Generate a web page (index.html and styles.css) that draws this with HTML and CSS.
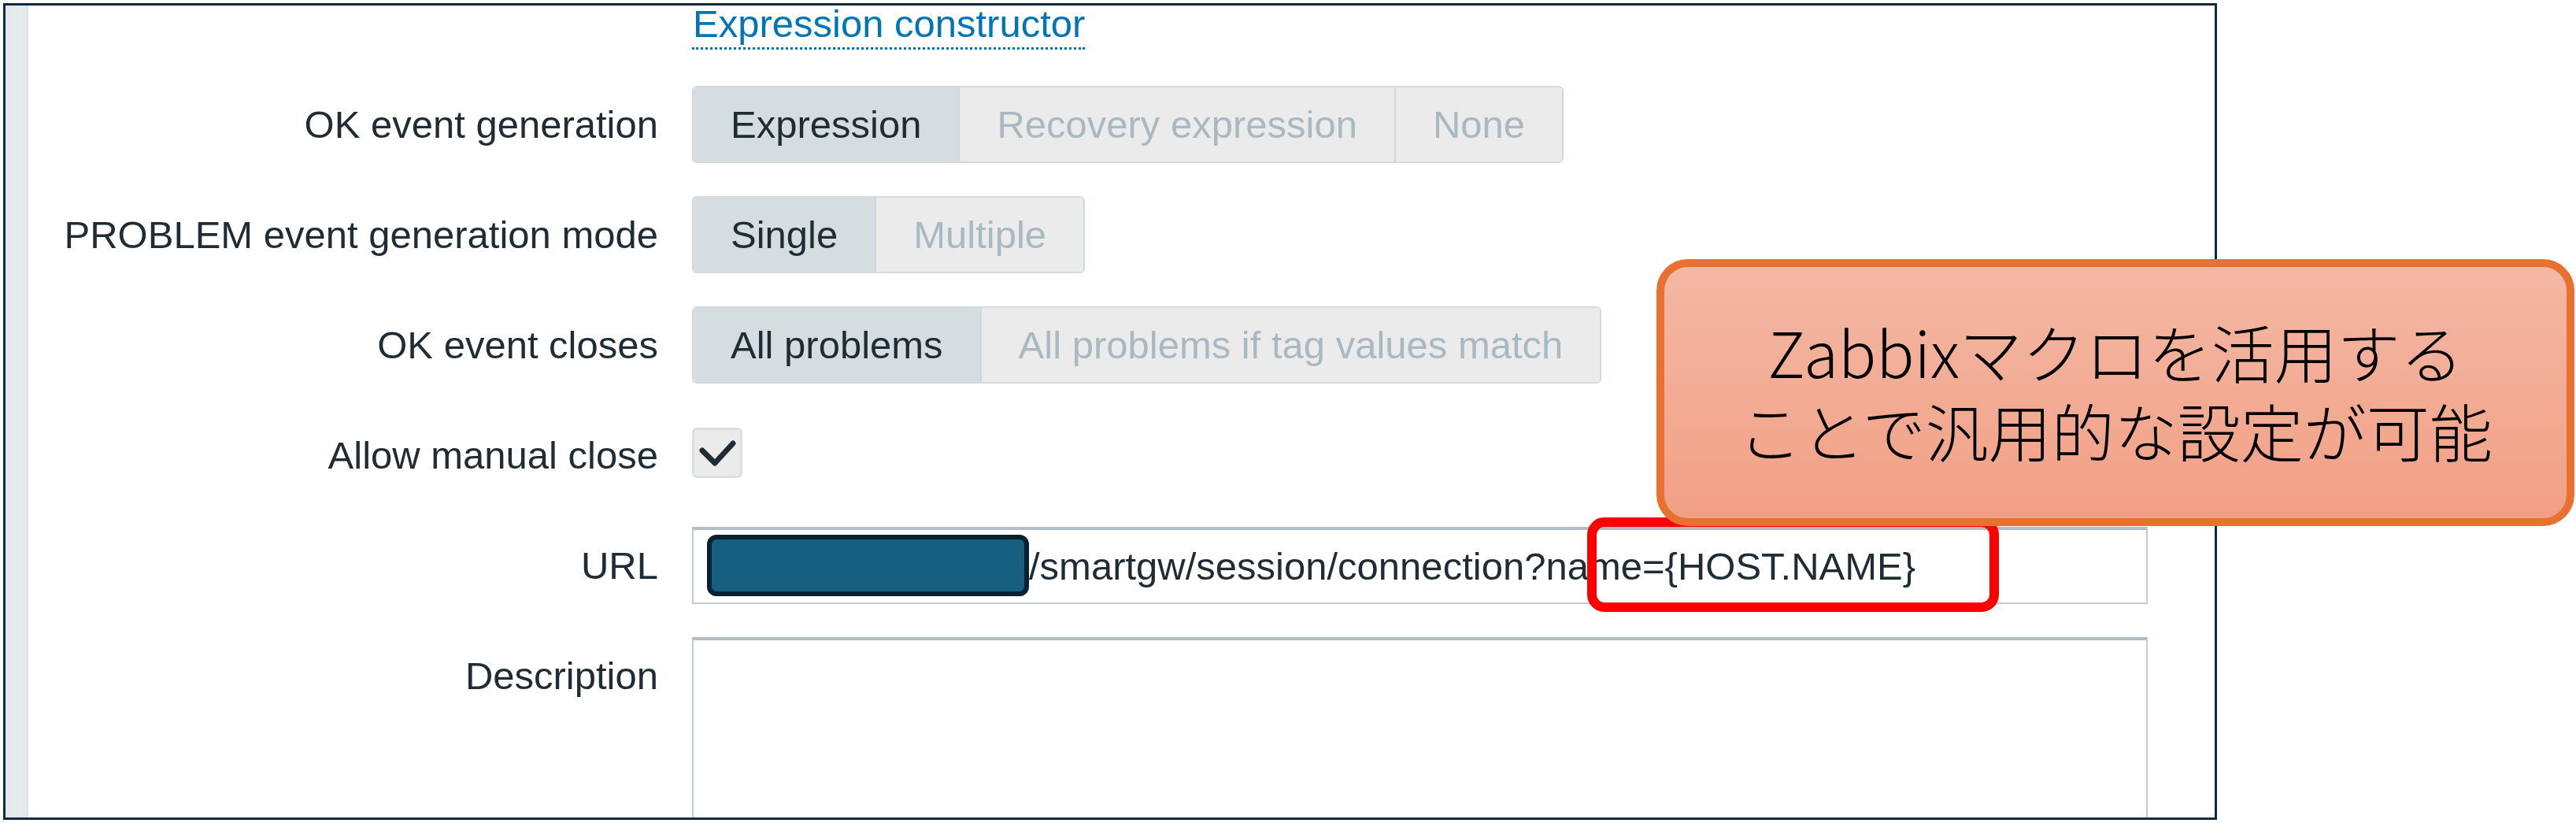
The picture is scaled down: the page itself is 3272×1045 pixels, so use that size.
FILE: index.html
```html
<!DOCTYPE html>
<html lang="ja">
<head>
<meta charset="utf-8">
<title>Trigger settings</title>
<link rel="stylesheet" href="styles.css">
</head>
<body>
<div class="frame">
  <div class="strip"></div>
  <div class="form">
    <div class="label"></div>
    <div class="link-row"><a class="link">Expression constructor</a></div>

    <div class="label">OK event generation</div>
    <div class="seg">
      <span class="on">Expression</span>
      <span>Recovery expression</span>
      <span>None</span>
    </div>

    <div class="label">PROBLEM event generation mode</div>
    <div class="seg">
      <span class="on">Single</span>
      <span>Multiple</span>
    </div>

    <div class="label">OK event closes</div>
    <div class="seg">
      <span class="on">All problems</span>
      <span>All problems if tag values match</span>
    </div>

    <div class="label">Allow manual close</div>
    <div class="check-cell">
      <span class="checkbox">
        <svg width="58" height="58" viewBox="0 0 58 58"><polyline points="10,26 26,42 49,17" fill="none" stroke="#1f2c33" stroke-width="7" stroke-linecap="round" stroke-linejoin="round"/></svg>
      </span>
    </div>

    <div class="label">URL</div>
    <div class="input"><span class="redact"></span><span class="url">/smartgw/session/connection?name={HOST.NAME}</span></div>

    <div class="label">Description</div>
    <div class="textarea"></div>
  </div>
</div>

<div class="redbox"></div>
<div class="callout">
  <div class="callout-text"><div>Zabbixマクロを活用する</div><div>ことで汎用的な設定が可能</div></div>
</div>
</body>
</html>
```

FILE: styles.css
```css
html, body {
  margin: 0;
  padding: 0;
  background: #ffffff;
}
body {
  position: relative;
  width: 3272px;
  height: 1045px;
  overflow: hidden;
  font-family: "Liberation Sans", Arial, sans-serif;
  font-size: 49px;
  color: #1f2c33;
}
.frame {
  box-sizing: border-box;
  margin: 4px 0 0 4px;
  width: 2812px;
  height: 1037px;
  border: 3px solid #112a44;
  display: flex;
  overflow: hidden;
  background: #ffffff;
}
.strip {
  flex: 0 0 29px;
  background: linear-gradient(to right, #e3e7ea 0%, #e9ecee 70%, #e4e8eb 88%, #d9dfe2 100%);
}
.form {
  flex: 1;
  padding-top: 1px;
  display: grid;
  grid-template-columns: 800px 1fr;
  column-gap: 43px;
  row-gap: 42px;
  align-content: start;
}
.label {
  text-align: right;
  line-height: 98px;
  height: 98px;
  white-space: nowrap;
}
.label:first-child {
  height: auto;
}
.link-row {
  display: flex;
  margin-bottom: 4px;
}
.link {
  display: block;
  line-height: 44px;
  padding: 0 0 8px 1px;
  color: #0275b8;
  border-bottom: 3px dotted #0275b8;
  cursor: pointer;
}
.seg {
  justify-self: start;
  display: flex;
  box-sizing: border-box;
  height: 98px;
  border: 2px solid #d3dade;
  border-radius: 6px;
  overflow: hidden;
}
.seg span {
  padding: 0 47px;
  line-height: 94px;
  background: #ebebeb;
  color: #a9b9c1;
  border-left: 2px solid #d0d7db;
  white-space: nowrap;
}
.seg span:first-child {
  border-left: 0;
}
.seg span.on {
  background: #d6dde1;
  color: #1f2c33;
}
.check-cell {
  height: 98px;
  display: flex;
  align-items: center;
}
.checkbox {
  box-sizing: border-box;
  width: 64px;
  height: 64px;
  margin-top: -6px;
  background: #ebebeb;
  border: 3px solid #d9dfe3;
  border-radius: 6px;
  display: flex;
  align-items: center;
  justify-content: center;
}
.input {
  box-sizing: border-box;
  width: 1849px;
  height: 98px;
  border: 2px solid #c3ccd1;
  border-top: 4px solid #b2bec5;
  display: flex;
  align-items: center;
  padding-left: 17px;
  white-space: nowrap;
}
.redact {
  box-sizing: border-box;
  flex: 0 0 409px;
  height: 78px;
  margin-top: -2px;
  background: #175f81;
  border: 6px solid #06212f;
  border-radius: 12px;
}
.url {
  color: #1f2c33;
}
.textarea {
  box-sizing: border-box;
  width: 1849px;
  height: 320px;
  border: 2px solid #c3ccd1;
  border-top: 4px solid #b2bec5;
}
.redbox {
  position: absolute;
  left: 2016px;
  top: 657px;
  width: 523px;
  height: 120px;
  box-sizing: border-box;
  border: 12px solid #ff0000;
  border-radius: 22px;
}
.callout {
  position: absolute;
  left: 2104px;
  top: 329px;
  width: 1166px;
  height: 339px;
  box-sizing: border-box;
  border: 10px solid #e87131;
  border-radius: 40px;
  background: linear-gradient(#f4b8a4, #f1a085);
  display: flex;
  align-items: center;
  justify-content: center;
  padding-bottom: 8px;
}
.callout-text {
  font-family: "Noto Sans CJK JP", "Noto Sans", sans-serif;
  font-size: 80px;
  font-weight: 300;
  line-height: 100px;
  color: #000000;
  text-align: center;
  white-space: nowrap;
}
```
